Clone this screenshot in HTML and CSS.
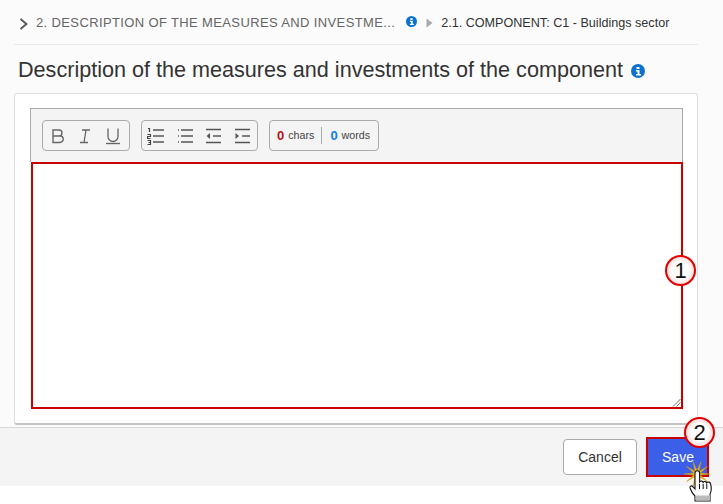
FILE: index.html
```html
<!DOCTYPE html>
<html lang="en">
<head>
<meta charset="utf-8">
<title>Description of the measures</title>
<link rel="stylesheet" href="styles.css">
</head>
<body>
<div class="page">
  <main class="main">
    <nav class="crumbs">
      <svg class="chev" width="10" height="12" viewBox="0 0 10 12"><path d="M1.500 1l6 5-6 5" fill="none" stroke="#555" stroke-width="1.800"/></svg>
      <span class="crumb-a">2. DESCRIPTION OF THE MEASURES AND INVESTME...</span>
      <svg class="info-s" width="11" height="11" viewBox="0 0 14 14"><circle cx="7" cy="7" r="7" fill="#0b73cf"/><path d="M5.500 3h3v2h-3zM5 6h3.500v4H10v1.500H5V10h1.500V7.500H5z" fill="#fff"/></svg>
      <svg class="tri" width="7" height="10" viewBox="0 0 7 10"><path d="M0.500 0.500L6.500 5 0.500 9.500z" fill="#aaa"/></svg>
      <span class="crumb-b">2.1. COMPONENT: C1 - Buildings sector</span>
    </nav>
    <h1 class="title">Description of the measures and investments of the component
      <svg class="info-l" width="14" height="14" viewBox="0 0 14 14"><circle cx="7" cy="7" r="7" fill="#0b73cf"/><path d="M5.500 3h3v2h-3zM5 6h3.500v4H10v1.500H5V10h1.500V7.500H5z" fill="#fff"/></svg>
    </h1>
    <section class="card">
      <div class="editor">
        <div class="toolbar">
          <div class="group group-text">
            <svg class="ico" width="14" height="16" viewBox="0 0 14 16"><path d="M2 2h6a3 3 0 0 1 0 6H2zM2 8h7a3.200 3.200 0 0 1 0 6.500H2z" fill="none" stroke="#666" stroke-width="1.400"/></svg>
            <svg class="ico" width="14" height="16" viewBox="0 0 14 16"><path d="M4 2h8M2 14.500h8M8 2L6 14.500" fill="none" stroke="#666" stroke-width="1.300"/></svg>
            <svg class="ico" width="16" height="18" viewBox="0 0 16 18"><path d="M3 1.500v8a5 5 0 0 0 10 0v-8" fill="none" stroke="#666" stroke-width="1.300"/><path d="M1 16.500h14" stroke="#666" stroke-width="1.400"/></svg>
          </div>
          <div class="group group-list">
            <svg class="ico" width="17" height="18" viewBox="0 0 17 18"><path d="M6 3h11M6 9h11M6 15h11" stroke="#555" stroke-width="1.300"/><path d="M1 1.500h1.500V5M0.500 7.500h3v2h-3v2h3M0.500 13.500h3v4h-3M1.500 15.500h2" fill="none" stroke="#444" stroke-width="1.200"/></svg>
            <svg class="ico" width="15" height="18" viewBox="0 0 15 18"><path d="M3 3h12M3 9h12M3 15h12" stroke="#555" stroke-width="1.300"/><path d="M0 3h1M0 9h1M0 15h1" stroke="#555" stroke-width="1.300"/></svg>
            <svg class="ico" width="15" height="18" viewBox="0 0 15 18"><path d="M0 2.500h15M7 9h8M0 15.500h15" stroke="#555" stroke-width="1.300"/><path d="M4 6v6L0.500 9z" fill="#555"/></svg>
            <svg class="ico" width="15" height="18" viewBox="0 0 15 18"><path d="M0 2.500h15M7 9h8M0 15.500h15" stroke="#555" stroke-width="1.300"/><path d="M0.500 6v6L4 9z" fill="#555"/></svg>
          </div>
          <div class="group group-count">
            <span class="num num-red">0</span><span class="lbl">chars</span>
            <span class="sep"></span>
            <span class="num num-blue">0</span><span class="lbl">words</span>
          </div>
        </div>
        <div class="area">
          <svg class="grip" width="9" height="9" viewBox="0 0 9 9"><path d="M1 8.500L8.500 1M4.500 8.500L8.500 4.500" stroke="#777" stroke-width="1"/></svg>
        </div>
      </div>
    </section>
  </main>
  <footer class="footer">
    <button class="btn btn-cancel" type="button">Cancel</button>
    <button class="btn btn-save" type="button">Save</button>
  </footer>
  <div class="callout callout-1">1</div>
  <div class="callout callout-2">2</div>
  <svg class="click" width="40" height="53" viewBox="0 0 40 53">
    <path d="M30 23L20.300 24.100 27.500 30.600 19 25.800 21 35.400 17 26.500 13 35.400 15 25.800 6.500 30.600 13.700 24.100 4 23 13.700 21.900 6.500 15.400 15 20.200 13 10.600 17 19.500 21 10.600 19 20.200 27.500 15.400 20.300 21.900z" fill="#eeb422" stroke="#c8960f" stroke-width="0.500"/>
    <path d="M15 22a2.300 2.300 0 0 1 4.600 0v9a2 2 0 0 1 3.600 0.500a2 2 0 0 1 3.600 0.500a2 2 0 0 1 3.700 1c1 3 1 7-0.500 10v7H15v-5c-2-2-4-5-5-8c-0.500-2 2-3 3-1l2 2z" fill="#fff" stroke="#111" stroke-width="1.100"/>
    <path d="M15.600 44.500h14.300v5H15.600z" fill="#bbb"/>
    <path d="M19.500 33v5M23.200 33v5M26.800 33v5" stroke="#111" stroke-width="1"/>
  </svg>
</div>
</body>
</html>
```
FILE: styles.css
```css
* { box-sizing: border-box; }
html, body { margin: 0; padding: 0; background: #fff; }
.page {
  position: relative;
  width: 723px;
  height: 504px;
  overflow: hidden;
  font-family: "Liberation Sans", Arial, sans-serif;
}
.main {
  height: 428px;
  padding: 0 25px 0 14px;
  background: #fbfbfb;
  border-bottom: 1px solid #d8d8d8;
}
.crumbs {
  display: flex;
  align-items: center;
  height: 45px;
  padding: 1px 0 0 5px;
  border-bottom: 1px solid #e8e8e8;
  white-space: nowrap;
}
.chev { margin-right: 7px; margin-top: 2px; }
.crumb-a { color: #666; font-size: 13px; letter-spacing: 0.37px; }
.info-s { margin: -3px 0 0 11px; }
.tri { margin: 0 0 0 9px; }
.crumb-b { color: #333; font-size: 12.600px; margin-left: 8px; }
.title {
  margin: 0;
  padding: 12px 0 0 4px;
  height: 48px;
  font-size: 21.600px;
  line-height: 26px;
  font-weight: 400;
  color: #333;
  white-space: nowrap;
}
.info-l { vertical-align: -1px; margin-left: 2px; }
.card {
  height: 332px;
  padding: 14px 14px 0 15px;
  background: #fff;
  border: 1px solid #ddd;
  border-bottom: 2px solid #c4c4c4;
  border-radius: 3px;
}
.editor { width: 653px; }
.toolbar {
  display: flex;
  align-items: center;
  gap: 11px;
  height: 54px;
  padding: 0 11px;
  background: #f4f4f4;
  border: 1px solid #aaa;
  border-bottom: 0;
}
.group {
  display: flex;
  align-items: center;
  justify-content: space-between;
  height: 31px;
  background: #f4f4f4;
  border: 1px solid #aaa;
  border-radius: 4px;
}
.group-text { width: 88px; padding: 0 8px; }
.group-list { width: 117px; padding: 0 7px 0 5px; }
.group-count { width: 110px; padding: 0 7px 1px; justify-content: flex-start; }
.num { font-size: 13px; font-weight: 700; }
.num-red { color: #b5121b; }
.num-blue { color: #0b80e0; }
.lbl { font-size: 10.700px; color: #444; margin-left: 4px; }
.sep { width: 1px; height: 17px; background: #aaa; margin: 0 8px 0 7px; }
.area {
  position: relative;
  height: 247px;
  margin-left: 1px;
  background: #fff;
  border: 2px solid #c80000;
}
.grip { position: absolute; right: 0; bottom: 0; }
.footer {
  display: flex;
  justify-content: flex-end;
  align-items: flex-start;
  gap: 9px;
  height: 58px;
  padding: 11px 14px 0 0;
  background: #f4f4f4;
}
.btn {
  height: 36px;
  font-family: inherit;
  font-size: 14px;
  border-radius: 4px;
  padding: 0;
}
.btn-cancel { width: 74px; background: #fff; color: #333; border: 1px solid #aaa; }
.btn-save { width: 63px; height: 40px; margin-top: -2px; padding-left: 1px; background: #3b5fe8; color: #fff; border: 2px solid #c80000; border-radius: 0; }
.callout {
  position: absolute;
  width: 31px;
  height: 31px;
  border-radius: 50%;
  border: 2px solid #e00000;
  background: radial-gradient(circle, #fff 45%, #f3b0b0 100%);
  color: #111;
  font-size: 22px;
  line-height: 27px;
  text-align: center;
}
.callout-1 { left: 665px; top: 255px; }
.callout-2 { left: 684px; top: 417px; }
.click { position: absolute; left: 680px; top: 451px; }
```
